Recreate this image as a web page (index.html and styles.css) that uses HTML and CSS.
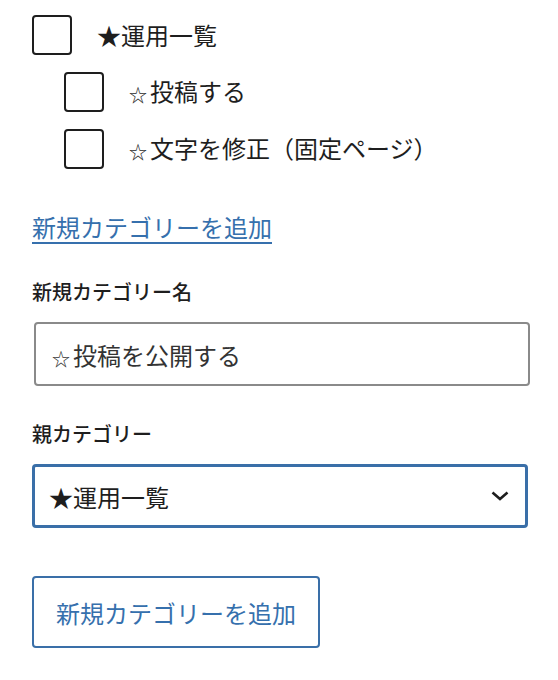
FILE: index.html
```html
<!DOCTYPE html>
<html lang="ja">
<head>
<meta charset="utf-8">
<link rel="stylesheet" href="styles.css">
</head>
<body>
<div class="panel">
  <ul class="cats">
    <li class="cat">
      <div class="row"><span class="box"></span><span class="cat-label">★運用一覧</span></div>
      <ul class="cats child">
        <li class="cat"><div class="row"><span class="box"></span><span class="cat-label"><span class="ostar">☆</span>投稿する</span></div></li>
        <li class="cat"><div class="row"><span class="box"></span><span class="cat-label"><span class="ostar">☆</span>文字を修正（固定ページ）</span></div></li>
      </ul>
    </li>
  </ul>
  <a class="add-link" href="#">新規カテゴリーを追加</a>
  <form class="add-form">
    <label class="field-label">新規カテゴリー名</label>
    <div class="input"><span><span class="ostar">☆</span>投稿を公開する</span></div>
    <label class="field-label second">親カテゴリー</label>
    <div class="select">
      <span>★運用一覧</span>
      <svg class="chev" width="20" height="12" viewBox="0 0 20 12"><path d="M2.5 2.5 L10 9 L17.5 2.5" fill="none" stroke="#1e1e1e" stroke-width="2.6"/></svg>
    </div>
    <button type="button" class="btn">新規カテゴリーを追加</button>
  </form>
</div>
</body>
</html>
```
FILE: styles.css
```css
* { box-sizing: border-box; }
body {
  margin: 0;
  background: #fff;
  font-family: "Noto Sans CJK JP", "Noto Sans", sans-serif;
  color: #1e1e1e;
}
.panel {
  padding: 15px 30px 0 32px;
}
.cats {
  list-style: none;
  margin: 0;
  padding: 0;
  display: flex;
  flex-direction: column;
  gap: 17px;
}
.cats.child {
  margin-top: 17px;
  padding-left: 32px;
}
.row {
  display: flex;
  align-items: center;
  gap: 25px;
  height: 40px;
}
.box {
  width: 40px;
  height: 40px;
  border: 2px solid #1e1e1e;
  border-radius: 4px;
  flex: none;
}
.cat-label {
  font-size: 24px;
  line-height: 32px;
}
.ostar {
  font-size: 18px;
  margin-right: 3px;
  vertical-align: -1px;
}
.add-link {
  display: inline-block;
  margin-top: 42px;
  font-size: 24px;
  line-height: 32px;
  color: #3670ad;
  text-decoration: underline;
  text-decoration-thickness: 2px;
  text-underline-offset: 5px;
}
.add-form {
  display: flex;
  flex-direction: column;
  align-items: flex-start;
}
.field-label {
  margin-top: 35px;
  font-size: 20px;
  line-height: 28px;
  font-weight: 500;
}
.field-label.second {
  margin-top: 34px;
}
.input {
  margin-top: 16px;
  margin-left: 2px;
  width: 496px;
  height: 64px;
  border: 2px solid #8a8a8a;
  border-radius: 4px;
  padding: 0 16px;
  display: flex;
  align-items: center;
  font-size: 24px;
  color: #333;
}
.select {
  margin-top: 16px;
  width: 496px;
  height: 64px;
  border: 3px solid #3a6fa8;
  border-radius: 4px;
  padding: 0 15px 0 14px;
  display: flex;
  align-items: center;
  justify-content: space-between;
  font-size: 24px;
}
.chev { flex: none; }
.btn {
  margin-top: 48px;
  width: 288px;
  height: 72px;
  background: #fff;
  border: 2px solid #3a6fa8;
  border-radius: 4px;
  font-family: inherit;
  font-size: 24px;
  color: #3670ad;
  padding: 0;
}
```
